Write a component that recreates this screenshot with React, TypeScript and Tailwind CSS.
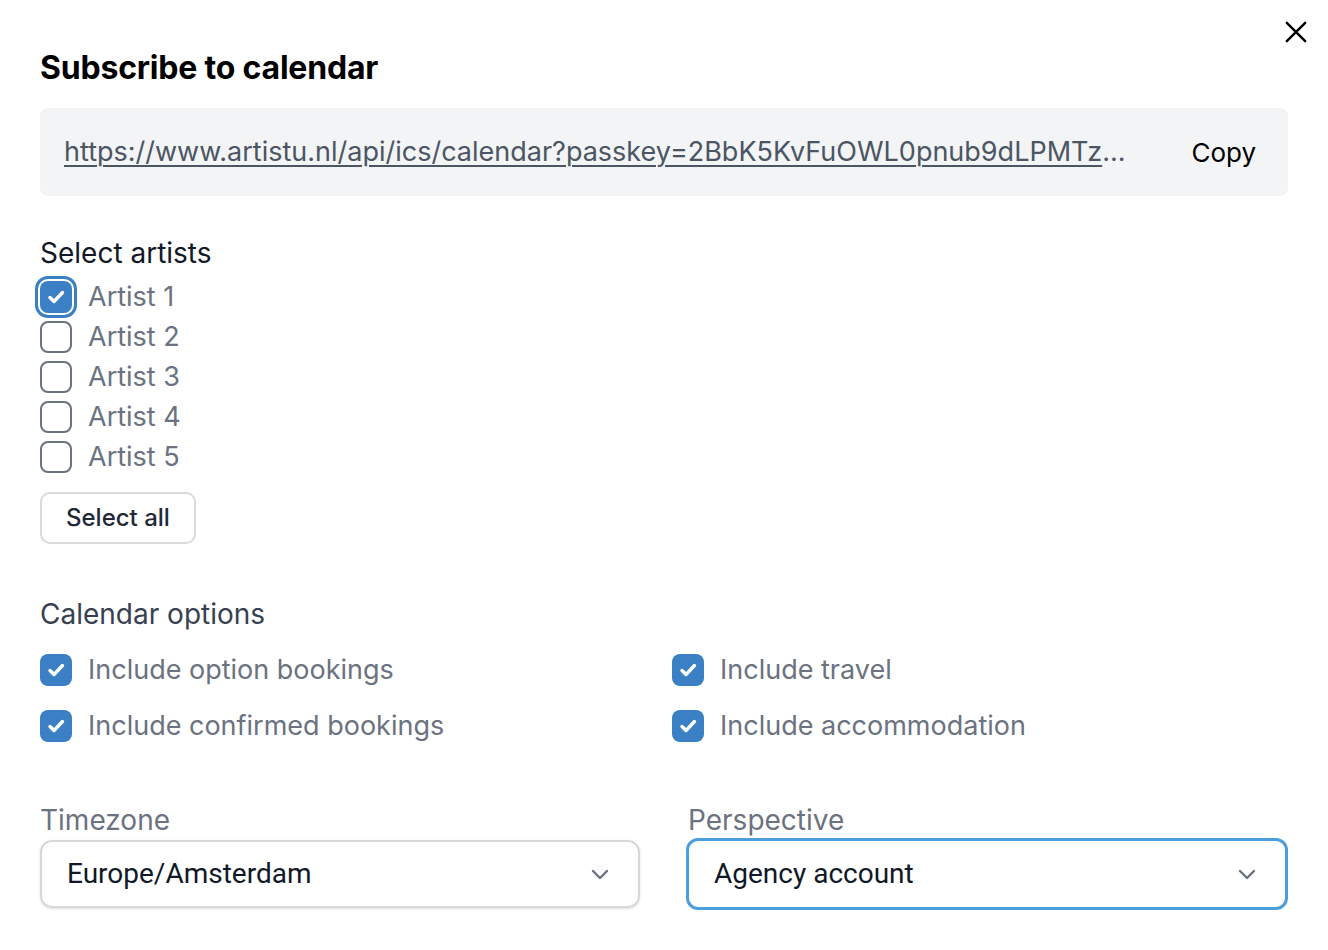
import { useState } from 'react';

const ARTISTS = ['Artist 1', 'Artist 2', 'Artist 3', 'Artist 4', 'Artist 5'];

const OPTIONS = [
  'Include option bookings',
  'Include travel',
  'Include confirmed bookings',
  'Include accommodation',
];

function Check() {
  return (
    <svg viewBox="0 0 32 32" className="h-8 w-8" fill="none">
      <path d="M10 16.5l4 4 8.5-9" stroke="white" strokeWidth="3.4" strokeLinecap="round" strokeLinejoin="round" />
    </svg>
  );
}

function Chevron() {
  return (
    <svg viewBox="0 0 24 24" className="h-6 w-6 text-gray-500" fill="none">
      <path d="M5 9l7 7 7-7" stroke="currentColor" strokeWidth="2.4" strokeLinecap="round" strokeLinejoin="round" />
    </svg>
  );
}

export default function App() {
  const [selected, setSelected] = useState<string[]>(['Artist 1']);

  const toggle = (a: string) =>
    setSelected((s) => (s.includes(a) ? s.filter((x) => x !== a) : [...s, a]));

  return (
    <div className="relative min-h-[950px] w-[1328px] bg-white px-10 pt-[48px] font-['Inter',sans-serif]">
      <button className="absolute right-[15px] top-[15px] text-black">
        <svg viewBox="0 0 24 24" className="h-[34px] w-[34px]" fill="none">
          <path d="M5.5 5.5l13 13M18.5 5.5l-13 13" stroke="currentColor" strokeWidth="1.7" strokeLinecap="round" />
        </svg>
      </button>

      <h2 className="text-[32px] font-bold leading-10 tracking-[-0.2px] text-black">Subscribe to calendar</h2>

      <div className="mt-[20px] flex h-[88px] w-[1248px] items-center justify-between rounded-lg bg-[#f3f4f6] pl-6 pr-8">
        <span className="whitespace-nowrap text-[27px] text-[#4b5563]">
          <a className="underline decoration-[1.5px] underline-offset-[4px]">
            https://www.artistu.nl/api/ics/calendar?passkey=2BbK5KvFuOWL0pnub9dLPMTz
          </a>
          ...
        </span>
        <button className="text-[26px] text-black">Copy</button>
      </div>

      <h3 className="mt-[39px] text-[28px] leading-9 text-[#111827]">Select artists</h3>
      <div className="mt-[6px] flex flex-col">
        {ARTISTS.map((a) => {
          const on = selected.includes(a);
          return (
            <label key={a} className="flex h-10 cursor-pointer items-center gap-4" onClick={() => toggle(a)}>
              <span
                className={
                  on
                    ? 'flex h-8 w-8 items-center justify-center rounded-lg bg-[#3b80c4] ring-[3px] ring-[#3b80c4] ring-offset-2'
                    : 'h-8 w-8 rounded-lg border-2 border-[#6b7280]'
                }
              >
                {on && <Check />}
              </span>
              <span className="text-[27px] text-[#6b7280]">{a}</span>
            </label>
          );
        })}
      </div>

      <button className="mt-[15px] box-border h-[52px] rounded-[10px] border-2 border-[#d8dade] px-6 text-[24px] font-medium text-[#1f2937]">
        Select all
      </button>

      <h3 className="mt-[52px] text-[28px] leading-9 text-[#374151]">Calendar options</h3>
      <div className="mt-[22px] grid w-[1248px] grid-cols-2 gap-x-4 gap-y-6">
        {OPTIONS.map((o) => (
          <label key={o} className="flex h-8 items-center gap-4">
            <span className="flex h-8 w-8 items-center justify-center rounded-lg bg-[#3b80c4]">
              <Check />
            </span>
            <span className="text-[27px] text-[#6b7280]">{o}</span>
          </label>
        ))}
      </div>

      <div className="mt-[60px] grid w-[1248px] grid-cols-2 gap-12">
        <div>
          <div className="text-[28px] leading-9 text-[#6b7280]">Timezone</div>
          <div className="mt-[2px] box-border flex h-[68px] items-center justify-between rounded-xl border-2 border-[#d6d8dc] pl-[25px] pr-[26px] shadow-sm">
            <span className="font-['Roboto',sans-serif] text-[28px] text-[#111827]">Europe/Amsterdam</span>
            <Chevron />
          </div>
        </div>
        <div>
          <div className="text-[28px] leading-9 text-[#6b7280]">Perspective</div>
          <div className="-ml-[2px] box-border flex h-[72px] items-center justify-between rounded-xl border-[3px] border-[#4b9fdc] pl-[25px] pr-[26px]">
            <span className="font-['Roboto',sans-serif] text-[28px] text-[#111827]">Agency account</span>
            <Chevron />
          </div>
        </div>
      </div>
    </div>
  );
}
